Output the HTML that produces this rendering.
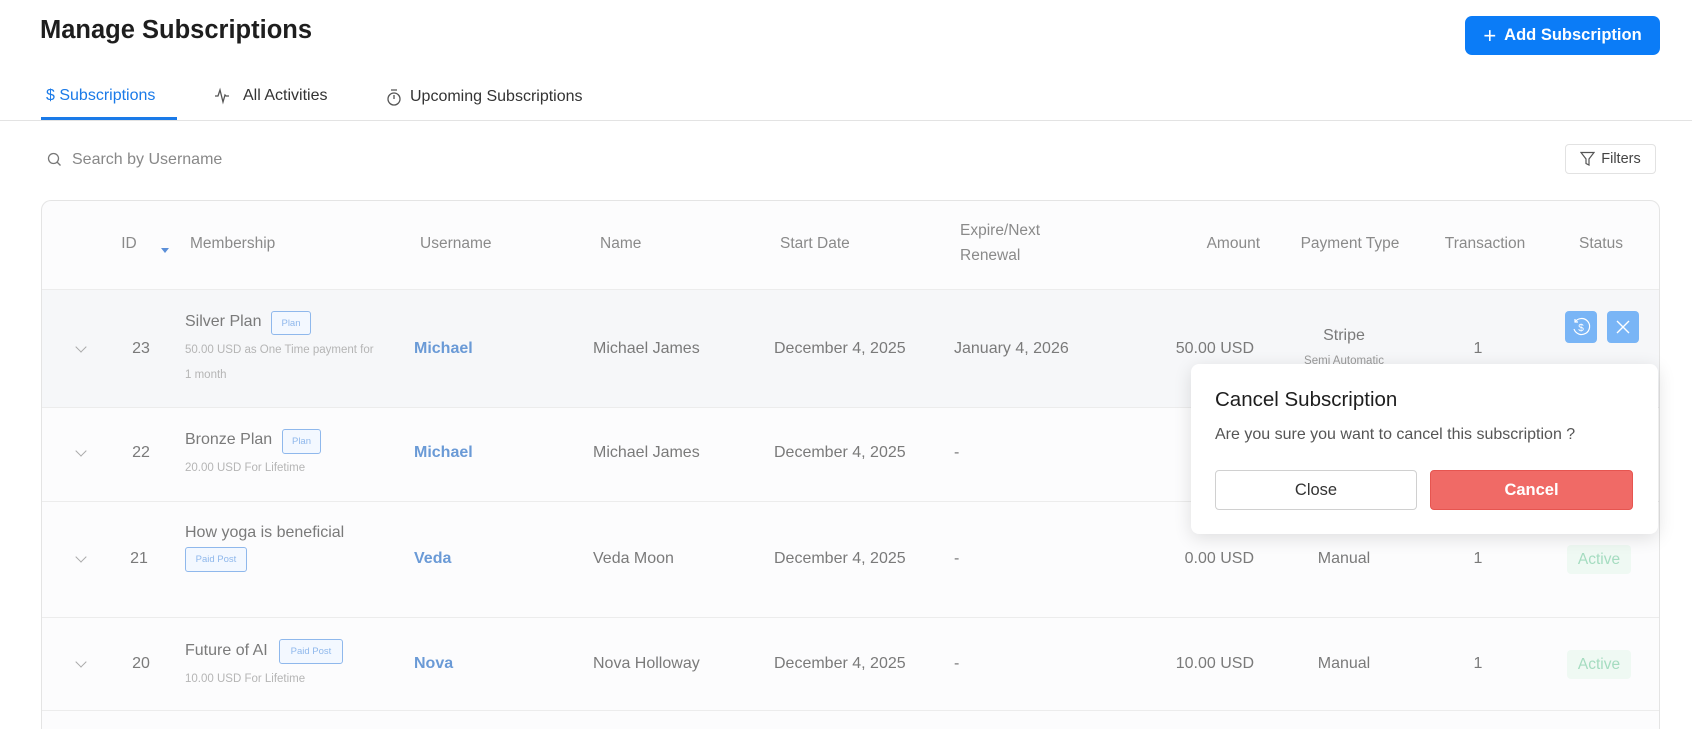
<!DOCTYPE html>
<html style="width:1692px;height:729px;overflow:hidden"><head><meta charset="utf-8"><style>
*{margin:0;padding:0;box-sizing:border-box}
body{width:1692px;height:729px;overflow:hidden;background:#fff;font-family:"Liberation Sans",sans-serif;position:relative;color:#777}
.a{position:absolute;white-space:nowrap}
.m{transform:translateY(-50%)}
.cm{transform:translate(-50%,-50%)}
.rm{transform:translate(-100%,-50%)}
.h{font-size:15.5px;color:#8a8a8a}
.t{font-size:16px;color:#7a7a7a}
.u{font-size:16px;color:#6a9ad6;font-weight:bold}
.s{font-size:11.5px;color:#b5b5b5}
.b{border:1px solid #8fb8ec;border-radius:3px;color:#8fb8ec;font-size:9.5px;background:#f3f8ff;display:flex;align-items:center;justify-content:center}
.row{position:absolute;left:42px;width:1617px;border-top:1px solid #ececec}
.act{position:absolute;width:64px;height:29px;background:#eff9f3;border-radius:4px;color:#a5dcc0;font-size:15.5px;display:flex;align-items:center;justify-content:center}
.chev{position:absolute;width:8px;height:8px;border-right:1.2px solid #aaa;border-bottom:1.2px solid #aaa;transform:rotate(45deg)}
</style></head><body>
<div class="a" style="left:40px;top:16px;font-size:25.5px;font-weight:bold;color:#1e1e1e">Manage Subscriptions</div>
<div class="a" style="left:1465px;top:16px;width:195px;height:39px;background:#0b7cf7;border-radius:7px;color:#fff;font-size:16.5px;font-weight:bold;display:flex;align-items:center;justify-content:center;gap:8px"><span style="font-weight:normal;font-size:22px;line-height:1">+</span>Add Subscription</div>

<div class="a m" style="left:46px;top:96px;font-size:16px;color:#1a7ae8">$ Subscriptions</div>
<svg class="a" style="left:213px;top:86px" width="20" height="20" viewBox="0 0 20 20" fill="none" stroke="#555" stroke-width="1.3"><path d="M2 10h3l2-6 3 12 2-7 1 1h3"/></svg>
<div class="a m" style="left:243px;top:96px;font-size:16px;color:#333">All Activities</div>
<svg class="a" style="left:385px;top:87px" width="18" height="20" viewBox="0 0 18 20" fill="none" stroke="#555" stroke-width="1.3"><circle cx="9" cy="12" r="6"/><path d="M6 3h6M9 12V8"/></svg>
<div class="a m" style="left:410px;top:97px;font-size:16px;color:#333">Upcoming Subscriptions</div>
<div class="a" style="left:41px;top:117px;width:136px;height:3px;background:#1a7ae8"></div>
<div class="a" style="left:0;top:120px;width:1692px;height:1px;background:#e3e3e3"></div>

<svg class="a" style="left:47px;top:152px" width="15" height="15" viewBox="0 0 15 15" fill="none" stroke="#777" stroke-width="1.3"><circle cx="6.5" cy="6.5" r="5"/><path d="M10 10l3.5 3.5"/></svg>
<div class="a m" style="left:72px;top:160px;font-size:16px;color:#888">Search by Username</div>
<div class="a" style="left:1565px;top:144px;width:91px;height:30px;border:1px solid #e2e2e2;border-radius:4px;display:flex;align-items:center;justify-content:center;gap:6px;font-size:14.5px;color:#444"><svg width="15" height="16" viewBox="0 0 15 16" fill="none" stroke="#555" stroke-width="1.2"><path d="M1 1.5h13L9 8v6l-3-1.5V8z"/></svg>Filters</div>

<div class="a" style="left:41px;top:200px;width:1619px;height:529px;border:1px solid #e4e4e4;border-bottom:none;border-radius:10px 10px 0 0;background:#fcfcfd"></div>
<div class="a cm h" style="left:129px;top:244px">ID</div>
<div class="a" style="left:161px;top:248px;width:0;height:0;border-left:4px solid transparent;border-right:4px solid transparent;border-top:5px solid #5b8fd8"></div>
<div class="a m h" style="left:190px;top:244px">Membership</div>
<div class="a m h" style="left:420px;top:244px">Username</div>
<div class="a m h" style="left:600px;top:244px">Name</div>
<div class="a m h" style="left:780px;top:244px">Start Date</div>
<div class="a m h" style="left:960px;top:231px">Expire/Next</div>
<div class="a m h" style="left:960px;top:256px">Renewal</div>
<div class="a rm h" style="left:1260px;top:244px">Amount</div>
<div class="a cm h" style="left:1350px;top:244px">Payment Type</div>
<div class="a cm h" style="left:1485px;top:244px">Transaction</div>
<div class="a cm h" style="left:1601px;top:244px">Status</div>

<div class="row" style="top:289px;height:118px;background:#f6f7f9"></div>
<div class="row" style="top:407px;height:94px"></div>
<div class="row" style="top:501px;height:116px"></div>
<div class="row" style="top:617px;height:93px"></div>
<div class="row" style="top:710px;height:19px"></div>

<!-- row 1 -->
<div class="chev" style="left:77px;top:343px"></div>
<div class="a cm t" style="left:141px;top:349px">23</div>
<div class="a m t" style="left:185px;top:322px">Silver Plan</div>
<div class="a b" style="left:271px;top:311px;width:40px;height:24px">Plan</div>
<div class="a m s" style="left:185px;top:350px">50.00 USD as One Time payment for</div>
<div class="a m s" style="left:185px;top:375px">1 month</div>
<div class="a m u" style="left:414px;top:349px">Michael</div>
<div class="a m t" style="left:593px;top:349px">Michael James</div>
<div class="a m t" style="left:774px;top:349px">December 4, 2025</div>
<div class="a m t" style="left:954px;top:349px">January 4, 2026</div>
<div class="a rm t" style="left:1254px;top:349px">50.00 USD</div>
<div class="a cm t" style="left:1344px;top:336px">Stripe</div>
<div class="a cm s" style="left:1344px;top:361px;color:#999">Semi Automatic</div>
<div class="a cm t" style="left:1478px;top:349px">1</div>
<div class="a" style="left:1565px;top:311px;width:32px;height:32px;background:#79b5f6;border-radius:4px;display:flex;align-items:center;justify-content:center"><svg width="20" height="20" viewBox="0 0 20 20" fill="none" stroke="#fff" stroke-width="1.2"><path d="M4 5A8 8 0 1 1 3 12"/><path d="M4 2v3h3"/><text x="10" y="14" font-size="10" fill="#fff" stroke="none" text-anchor="middle" font-family="Liberation Sans">$</text></svg></div>
<div class="a" style="left:1607px;top:311px;width:32px;height:32px;background:#79b5f6;border-radius:4px;display:flex;align-items:center;justify-content:center"><svg width="16" height="16" viewBox="0 0 16 16" stroke="#fff" stroke-width="1.4"><path d="M2 2l12 12M14 2L2 14"/></svg></div>

<!-- row 2 -->
<div class="chev" style="left:77px;top:447px"></div>
<div class="a cm t" style="left:141px;top:453px">22</div>
<div class="a m t" style="left:185px;top:440px">Bronze Plan</div>
<div class="a b" style="left:282px;top:429px;width:39px;height:25px">Plan</div>
<div class="a m s" style="left:185px;top:468px">20.00 USD For Lifetime</div>
<div class="a m u" style="left:414px;top:453px">Michael</div>
<div class="a m t" style="left:593px;top:453px">Michael James</div>
<div class="a m t" style="left:774px;top:453px">December 4, 2025</div>
<div class="a m t" style="left:954px;top:453px">-</div>

<!-- row 3 -->
<div class="chev" style="left:77px;top:553px"></div>
<div class="a cm t" style="left:139px;top:559px">21</div>
<div class="a m t" style="left:185px;top:533px">How yoga is beneficial</div>
<div class="a b" style="left:185px;top:547px;width:62px;height:25px">Paid Post</div>
<div class="a m u" style="left:414px;top:559px">Veda</div>
<div class="a m t" style="left:593px;top:559px">Veda Moon</div>
<div class="a m t" style="left:774px;top:559px">December 4, 2025</div>
<div class="a m t" style="left:954px;top:559px">-</div>
<div class="a rm t" style="left:1254px;top:559px">0.00 USD</div>
<div class="a cm t" style="left:1344px;top:559px">Manual</div>
<div class="a cm t" style="left:1478px;top:559px">1</div>
<div class="act" style="left:1567px;top:545px">Active</div>

<!-- row 4 -->
<div class="chev" style="left:77px;top:658px"></div>
<div class="a cm t" style="left:141px;top:664px">20</div>
<div class="a m t" style="left:185px;top:651px">Future of AI</div>
<div class="a b" style="left:279px;top:639px;width:64px;height:25px">Paid Post</div>
<div class="a m s" style="left:185px;top:679px">10.00 USD For Lifetime</div>
<div class="a m u" style="left:414px;top:664px">Nova</div>
<div class="a m t" style="left:593px;top:664px">Nova Holloway</div>
<div class="a m t" style="left:774px;top:664px">December 4, 2025</div>
<div class="a m t" style="left:954px;top:664px">-</div>
<div class="a rm t" style="left:1254px;top:664px">10.00 USD</div>
<div class="a cm t" style="left:1344px;top:664px">Manual</div>
<div class="a cm t" style="left:1478px;top:664px">1</div>
<div class="act" style="left:1567px;top:650px">Active</div>

<!-- popover -->
<div class="a" style="left:1191px;top:364px;width:467px;height:170px;background:#fff;border-radius:8px;box-shadow:0 4px 18px rgba(0,0,0,0.12)"></div>
<div class="a m" style="left:1215px;top:400px;font-size:20.5px;color:#1e1e1e">Cancel Subscription</div>
<div class="a m" style="left:1215px;top:435px;font-size:16px;color:#555">Are you sure you want to cancel this subscription ?</div>
<div class="a" style="left:1215px;top:470px;width:202px;height:40px;border:1px solid #d0d0d0;border-radius:4px;display:flex;align-items:center;justify-content:center;font-size:16.5px;color:#333">Close</div>
<div class="a" style="left:1430px;top:470px;width:203px;height:40px;background:#f06a66;border:1px solid #e65550;border-radius:4px;display:flex;align-items:center;justify-content:center;font-size:16.5px;color:#fff;font-weight:bold">Cancel</div>
</body></html>
